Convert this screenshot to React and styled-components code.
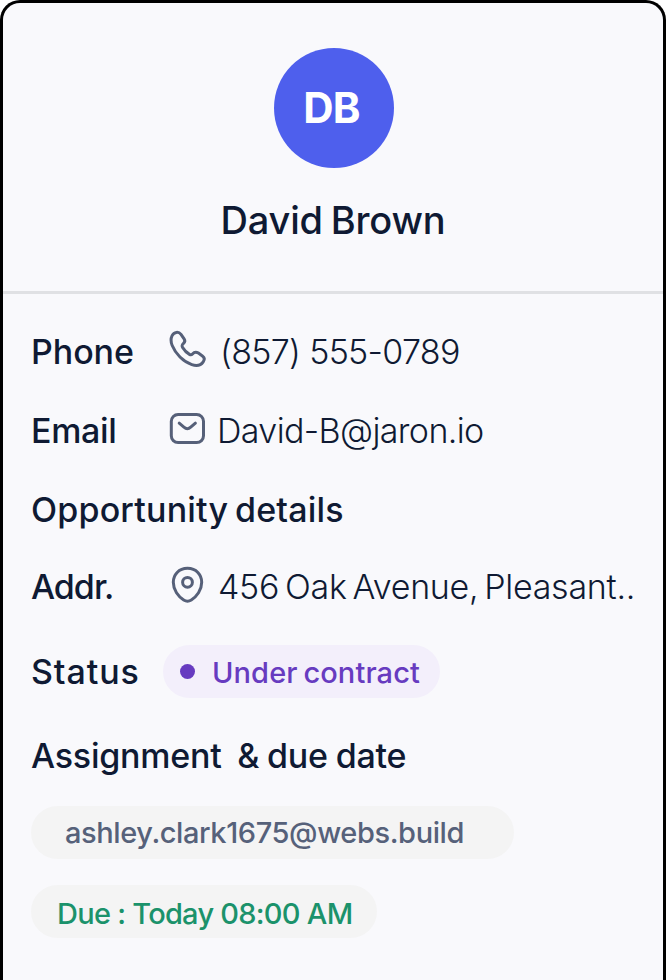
import React from 'react';
import styled, { createGlobalStyle } from 'styled-components';

const GlobalStyle = createGlobalStyle`
  *, *::before, *::after { box-sizing: border-box; }
  html, body { margin: 0; background: #fff; }
  body { font-family: Inter, "Liberation Sans", sans-serif; overflow: hidden; }
`;

const Card = styled.main`
  width: 666px;
  height: 980px;
  border: 3px solid #000;
  border-bottom: 0;
  border-radius: 20px 20px 0 0;
  background: #f9f9fc;
  color: #0f1a33;
  overflow: hidden;
`;

const Header = styled.header`
  height: 291px;
  padding-top: 45px;
  border-bottom: 3px solid #e0e1e4;
  display: flex;
  flex-direction: column;
  align-items: center;
`;

const Avatar = styled.div`
  width: 120px;
  height: 120px;
  margin-left: 2px;
  padding: 0 5px 2px 0;
  border-radius: 50%;
  background: #4e5fed;
  color: #fff;
  display: flex;
  align-items: center;
  justify-content: center;
  font-size: 42px;
  font-weight: 650;
  letter-spacing: -0.7px;
`;

const Name = styled.h1`
  margin: 24px 0 0;
  font-size: 38px;
  line-height: 56px;
  font-weight: 500;
  letter-spacing: -0.2px;
  word-spacing: -2px;
  white-space: nowrap;
`;

const Details = styled.section`
  padding: 18px 0 0 28px;
`;

const Row = styled.div`
  height: ${(p) => p.$height}px;
  display: flex;
  align-items: center;
`;

const Label = styled.span`
  flex: none;
  width: ${(p) => p.$width || 134}px;
  font-size: 34px;
  line-height: 42px;
  font-weight: 500;
  letter-spacing: ${(p) => p.$tracking}px;
  white-space: pre;
`;

const Value = styled.span`
  margin-left: ${(p) => p.$gap}px;
  font-size: 34px;
  line-height: 42px;
  font-weight: 300;
  letter-spacing: ${(p) => p.$tracking}px;
  word-spacing: ${(p) => p.$words || 0}px;
  white-space: nowrap;
`;

const Heading = styled.h2`
  margin: 0;
  font-size: 34px;
  line-height: 42px;
  font-weight: 500;
  letter-spacing: ${(p) => p.$tracking}px;
  word-spacing: ${(p) => p.$words || 0}px;
  white-space: pre;
`;

const Icon = styled.svg`
  flex: none;
  width: 44px;
  height: 44px;
  fill: none;
  stroke: #566079;
  stroke-width: 3;
  stroke-linecap: round;
  stroke-linejoin: round;
`;

const Pill = styled.div`
  width: ${(p) => p.$width}px;
  height: 53px;
  padding: ${(p) => p.$drop}px 0 0 ${(p) => p.$inset}px;
  border-radius: 27px;
  background: ${(p) => p.$background};
  color: ${(p) => p.$color};
  display: flex;
  align-items: center;
  font-size: 29px;
  line-height: 36px;
  font-weight: 500;
  letter-spacing: ${(p) => p.$tracking}px;
  word-spacing: ${(p) => p.$words || 0}px;
  white-space: nowrap;
`;

const Dot = styled.i`
  width: 15px;
  height: 15px;
  margin: -3px 17px 0 0;
  border-radius: 50%;
  background: #673bc0;
`;

const Chips = styled.div`
  display: flex;
  flex-direction: column;
  gap: 26px;
  padding-top: 13px;
`;

export default function App() {
  return (
    <>
      <GlobalStyle />
      <Card>
        <Header>
          <Avatar>DB</Avatar>
          <Name>David Brown</Name>
        </Header>
        <Details>
          <Row $height={80}>
            <Label $tracking={-0.06}>Phone</Label>
            <Icon viewBox="165 330 44 44">
              <path d="M172.1 335.6C174 331.8 178.6 331.3 181 334.4L184.1 338.9C185.3 340.7 185.1 342 183.5 343.4C181.8 345 181.5 345.6 182.6 347.5C184.4 350.5 186.8 352.9 189.8 354.6C191 355.2 191.6 354.9 192.5 353.9C194.3 351.9 196.2 351.7 198.4 353.1L202.4 355.9C204.5 357.4 204.6 359.8 203.2 361.8C200.7 365.5 196.5 366.2 191.8 364.6C183 361.6 175.6 353.8 172.2 345.5C170.6 341.6 170.5 338.8 172.1 335.6Z" />
            </Icon>
            <Value $gap={11} $tracking={-0.68}>(857) 555-0789</Value>
          </Row>
          <Row $height={78}>
            <Label $tracking={-0.35}>Email</Label>
            <Icon viewBox="165 409 44 44">
              <rect x="171.3" y="414.5" width="32.2" height="28.1" rx="6.8" />
              <path d="M179.2 423.2L183.9 427.2Q187.3 430.2 190.7 427.2L195.4 423.2" />
            </Icon>
            <Value $gap={8} $tracking={-0.62}>David-B@jaron.io</Value>
          </Row>
          <Row $height={80}>
            <Heading $tracking={0.18} $words={-2.5}>Opportunity details</Heading>
          </Row>
          <Row $height={74}>
            <Label $tracking={-1}>Addr.</Label>
            <Icon viewBox="165 565 44 44">
              <path d="M187.5 568.3C178.8 568.3 173.3 574.8 173.3 582.3C173.3 590 178.3 596.6 183.7 600C186.3 601.6 188.7 601.6 191.3 600C196.7 596.6 201.7 590 201.7 582.3C201.7 574.8 196.2 568.3 187.5 568.3Z" />
              <circle cx="187.5" cy="582.3" r="4.9" />
            </Icon>
            <Value $gap={9} $tracking={-0.27} $words={-3.5}>456 Oak Avenue, Pleasant..</Value>
          </Row>
          <Row $height={95}>
            <Label $width={132} $tracking={0.9}>Status</Label>
            <Pill $width={277} $inset={17} $drop={3} $background="#f3effb" $color="#673bc0" $tracking={0.1} $words={-2}>
              <Dot />
              Under contract
            </Pill>
          </Row>
          <Row $height={74}>
            <Heading $tracking={-0.23} $words={-1}>{'Assignment\u00a0 & due date'}</Heading>
          </Row>
          <Chips>
            <Pill $width={483} $inset={34} $drop={0} $background="#f4f4f4" $color="#56617a" $tracking={-0.4}>
              ashley.clark1675@webs.build
            </Pill>
            <Pill $width={346} $inset={26} $drop={4} $background="#f4f4f4" $color="#1b926b" $tracking={-0.74}>
              Due : Today 08:00 AM
            </Pill>
          </Chips>
        </Details>
      </Card>
    </>
  );
}
